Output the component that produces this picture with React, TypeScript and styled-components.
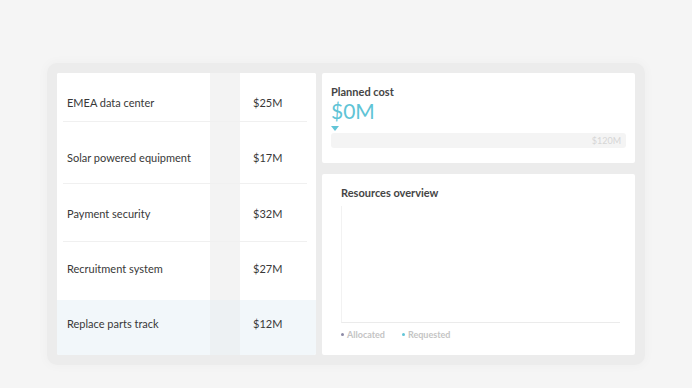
import React from "react";
import styled, { createGlobalStyle } from "styled-components";

const Global = createGlobalStyle`
  html, body { margin: 0; padding: 0; background: #f5f5f5; }
  body { font-family: Lato, "Noto Sans", sans-serif; color: #3b3b3b; }
  #root { width: 692px; height: 388px; overflow: hidden; }
`;

const Page = styled.div`
  width: 692px;
  height: 388px;
  box-sizing: border-box;
  padding: 63px 0 0 47px;
  background: #f5f5f5;
`;

const Frame = styled.div`
  width: 598px;
  height: 302px;
  box-sizing: border-box;
  padding: 10px;
  background: #ececec;
  border-radius: 10px;
  box-shadow: 0 0 8px 3px rgba(0, 0, 0, 0.02);
  display: grid;
  grid-template-columns: 259px 313px;
  column-gap: 6px;
`;

const TableCard = styled.div`
  background: #fff;
  border-radius: 2px;
  display: flex;
  flex-direction: column;
  overflow: hidden;
`;

const Row = styled.div<{ $h: number; $pt: number; $hl?: boolean; $last?: boolean }>`
  position: relative;
  height: ${(p) => p.$h}px;
  display: grid;
  grid-template-columns: 153px 30px 76px;
  background: ${(p) => (p.$hl ? "#f2f7fa" : "#fff")};
  & > * { padding-top: ${(p) => p.$pt}px; }
  ${(p) =>
    p.$last
      ? ""
      : `&::after {
    content: "";
    position: absolute;
    left: 6px;
    right: 9px;
    bottom: 0;
    height: 1px;
    background: #f0f0f0;
  }`}
`;

const NameCell = styled.div`
  padding-left: 10px;
  font-size: 11px;
  line-height: 14px;
  color: #383838;
  white-space: nowrap;
`;

const Gutter = styled.div<{ $hl?: boolean }>`
  background: ${(p) => (p.$hl ? "#edf1f3" : "#f3f3f3")};
`;

const ValueCell = styled.div`
  padding-left: 13px;
  font-size: 11px;
  line-height: 14px;
  color: #383838;
`;

const RightCol = styled.div`
  display: flex;
  flex-direction: column;
  gap: 11px;
`;

const CostCard = styled.div`
  height: 90px;
  box-sizing: border-box;
  background: #fff;
  border-radius: 2px;
  padding: 13px 9px 0 9px;
  display: flex;
  flex-direction: column;
`;

const CardTitle = styled.div`
  font-size: 11px;
  line-height: 12px;
  font-weight: 700;
  color: #454545;
`;

const Amount = styled.div`
  font-size: 21px;
  line-height: 22px;
  color: #5fc4d6;
  margin-top: 2px;
`;

const Marker = styled.div`
  width: 0;
  height: 0;
  border-left: 4px solid transparent;
  border-right: 4px solid transparent;
  border-top: 5px solid #62c5d7;
  margin-top: 4px;
`;

const Bar = styled.div`
  margin-top: 2px;
  height: 15px;
  background: #f4f4f4;
  border-radius: 3px;
  display: flex;
  align-items: center;
  justify-content: flex-end;
  padding-right: 5px;
  font-size: 9px;
  color: #d6d6d6;
`;

const ResourcesCard = styled.div`
  height: 181px;
  box-sizing: border-box;
  background: #fff;
  border-radius: 2px;
  padding: 13px 15px 0 19px;
  display: flex;
  flex-direction: column;
`;

const ChartArea = styled.div`
  margin-top: 7px;
  height: 116px;
  border-left: 1px solid #f2f2f2;
  border-bottom: 1px solid #ebebeb;
`;

const Legend = styled.div`
  display: flex;
  gap: 17px;
  margin-top: 6px;
  font-size: 9px;
  font-weight: 700;
  color: #c4c4c4;
`;

const LegendItem = styled.div`
  display: flex;
  align-items: center;
  gap: 3px;
`;

const Dot = styled.span<{ $c: string }>`
  width: 3px;
  height: 3px;
  border-radius: 50%;
  background: ${(p) => p.$c};
`;

const rows = [
  { name: "EMEA data center", value: "$25M", h: 49, pt: 23 },
  { name: "Solar powered equipment", value: "$17M", h: 62, pt: 29 },
  { name: "Payment security", value: "$32M", h: 58, pt: 23 },
  { name: "Recruitment system", value: "$27M", h: 58, pt: 20 },
  { name: "Replace parts track", value: "$12M", h: 55, pt: 17, hl: true },
];

export default function App() {
  return (
    <Page>
      <Global />
      <Frame>
        <TableCard>
          {rows.map((r, i) => (
            <Row key={r.name} $h={r.h} $pt={r.pt} $hl={r.hl} $last={i >= rows.length - 2}>
              <NameCell>{r.name}</NameCell>
              <Gutter $hl={r.hl} />
              <ValueCell>{r.value}</ValueCell>
            </Row>
          ))}
        </TableCard>
        <RightCol>
          <CostCard>
            <CardTitle>Planned cost</CardTitle>
            <Amount>$0M</Amount>
            <Marker />
            <Bar>$120M</Bar>
          </CostCard>
          <ResourcesCard>
            <CardTitle>Resources overview</CardTitle>
            <ChartArea />
            <Legend>
              <LegendItem>
                <Dot $c="#8c8aa6" />
                Allocated
              </LegendItem>
              <LegendItem>
                <Dot $c="#62c5d7" />
                Requested
              </LegendItem>
            </Legend>
          </ResourcesCard>
        </RightCol>
      </Frame>
    </Page>
  );
}
